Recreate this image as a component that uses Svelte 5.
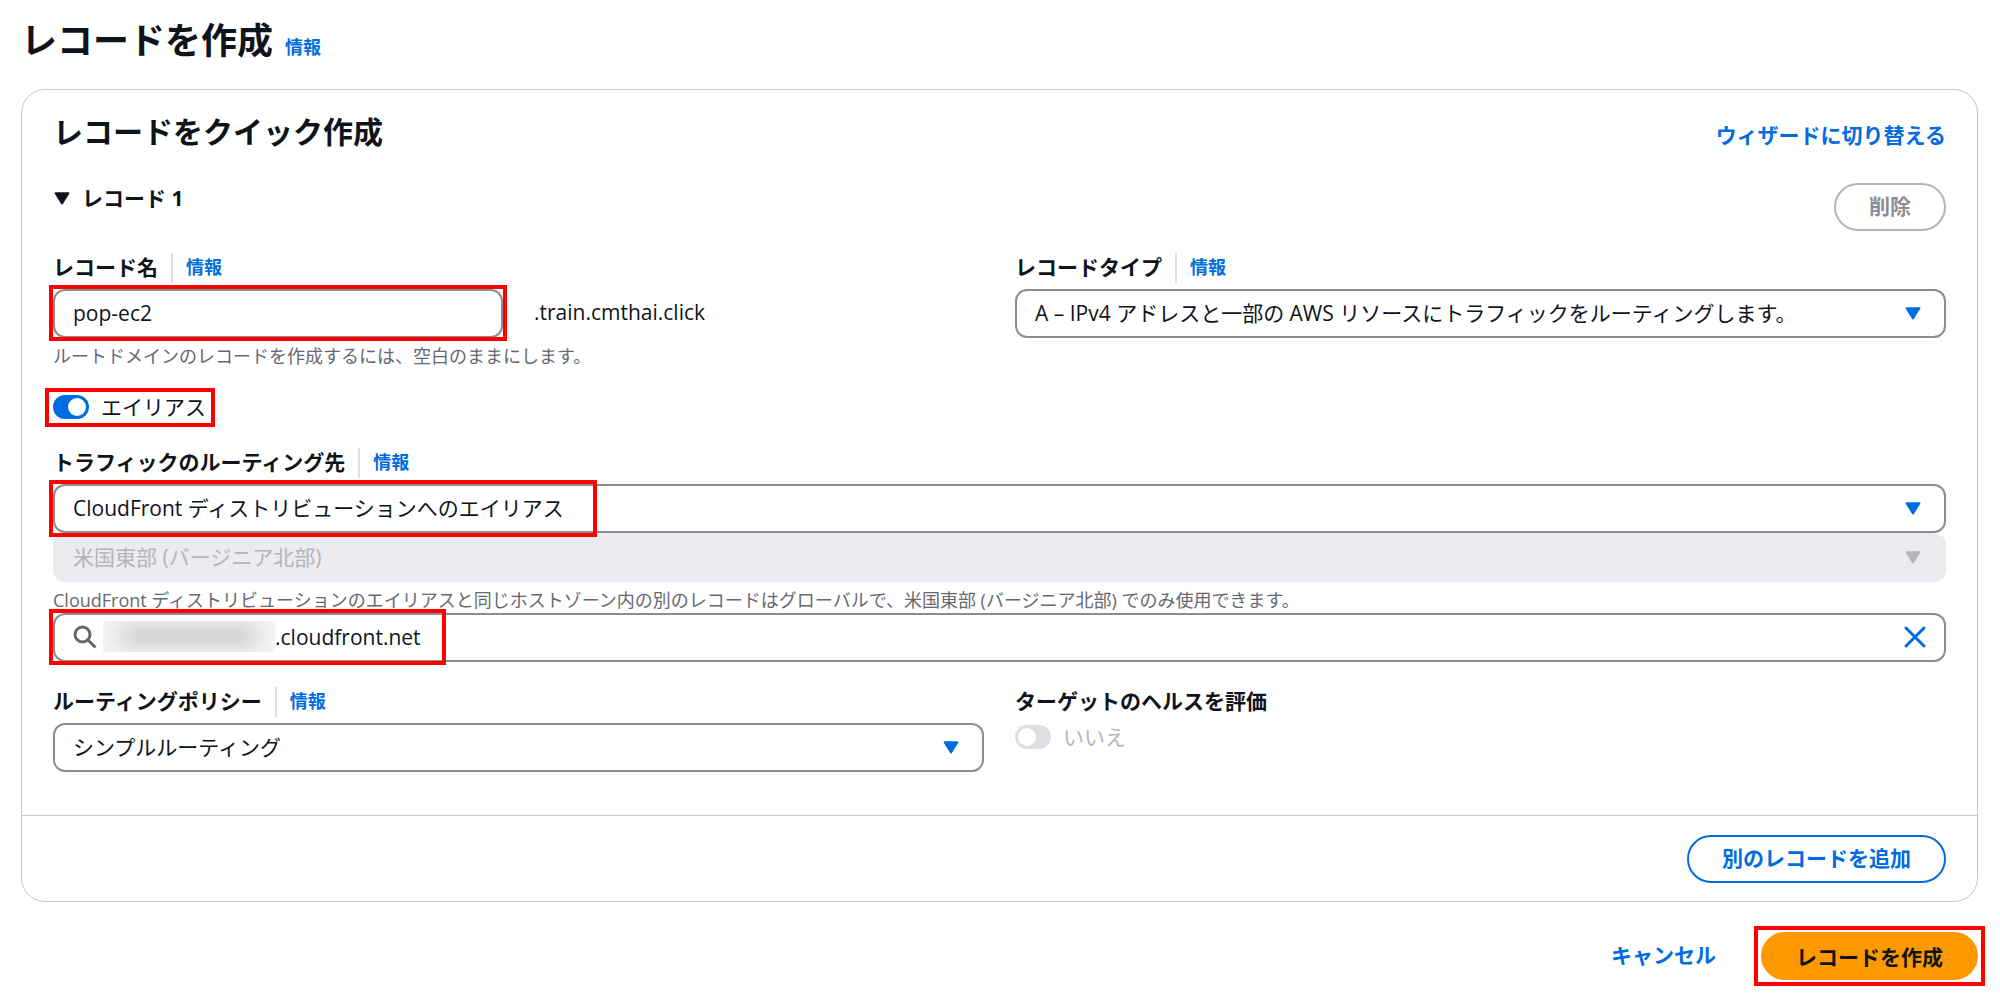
<script lang="ts">
  let recordName = 'pop-ec2';
  let recordType = 'A';
  let alias = true;
  let target = 'cloudfront';
  let region = 'us-east-1';
  let distribution = '.cloudfront.net';
  let policy = 'simple';
  let evaluateHealth = false;
  let open = true;
</script>

{#snippet caret()}
  <svg class="caret" viewBox="0 0 16 13" aria-hidden="true">
    <path d="M1.6 1.3h12.8L8 11.4z" fill="currentColor" stroke="currentColor" stroke-width="2" stroke-linejoin="round" />
  </svg>
{/snippet}

<main class="page">
  <header class="page-header">
    <h1>レコードを作成</h1>
    <a class="info" href="#info">情報</a>
  </header>

  <form on:submit|preventDefault>
    <section class="card">
      <div class="card-body">
        <div class="card-header">
          <h2>レコードをクイック作成</h2>
          <a class="link" href="#wizard">ウィザードに切り替える</a>
        </div>

        <div class="record-header">
          <button type="button" class="toggle-section" aria-expanded={open} on:click={() => (open = !open)}>
            {@render caret()}
            <span>レコード 1</span>
          </button>
          <button type="button" class="btn" disabled>削除</button>
        </div>

        {#if open}
          <div class="fields">
            <div class="columns">
              <div class="field">
                <div class="label-row">
                  <label for="record-name">レコード名</label>
                  <a class="info" href="#name-info">情報</a>
                </div>
                <div class="columns name-row">
                  <div class="mark mark-name">
                    <input id="record-name" class="control" type="text" bind:value={recordName} />
                  </div>
                  <span class="domain">.train.cmthai.click</span>
                </div>
                <p class="help name-help">ルートドメインのレコードを作成するには、空白のままにします。</p>
              </div>

              <div class="field">
                <div class="label-row">
                  <label for="record-type">レコードタイプ</label>
                  <a class="info" href="#type-info">情報</a>
                </div>
                <div class="select">
                  <select id="record-type" class="control" bind:value={recordType}>
                    <option value="A">A – IPv4 アドレスと一部の AWS リソースにトラフィックをルーティングします。</option>
                  </select>
                  {@render caret()}
                </div>
              </div>
            </div>

            <label class="switch mark mark-alias">
              <input type="checkbox" bind:checked={alias} />
              <span>エイリアス</span>
            </label>

            <div class="field">
              <div class="label-row">
                <label for="target">トラフィックのルーティング先</label>
                <a class="info" href="#target-info">情報</a>
              </div>
              <div class="select mark mark-target">
                <select id="target" class="control" bind:value={target}>
                  <option value="cloudfront">CloudFront ディストリビューションへのエイリアス</option>
                </select>
                {@render caret()}
              </div>
              <div class="select disabled">
                <select class="control" aria-label="リージョン" bind:value={region} disabled>
                  <option value="us-east-1">米国東部 (バージニア北部)</option>
                </select>
                {@render caret()}
              </div>
              <p class="help region-help">CloudFront ディストリビューションのエイリアスと同じホストゾーン内の別のレコードはグローバルで、米国東部 (バージニア北部) でのみ使用できます。</p>
              <div class="control search mark mark-search">
                <svg class="search-icon" viewBox="0 0 24 24" aria-hidden="true">
                  <circle cx="9.5" cy="9.5" r="7.5" />
                  <path d="M15 15l7.5 7.5" />
                </svg>
                <span class="redacted"><i></i></span>
                <input type="text" aria-label="ディストリビューションを選択" bind:value={distribution} />
                <button type="button" class="clear" aria-label="クリア" on:click={() => (distribution = '')}>
                  <svg viewBox="0 0 22 22" aria-hidden="true"><path d="M2 2l18 18M20 2L2 20" /></svg>
                </button>
              </div>
            </div>

            <div class="columns">
              <div class="field">
                <div class="label-row">
                  <label for="policy">ルーティングポリシー</label>
                  <a class="info" href="#policy-info">情報</a>
                </div>
                <div class="select">
                  <select id="policy" class="control" bind:value={policy}>
                    <option value="simple">シンプルルーティング</option>
                  </select>
                  {@render caret()}
                </div>
              </div>

              <div class="field">
                <div class="label-row">
                  <label for="health">ターゲットのヘルスを評価</label>
                </div>
                <label class="switch off">
                  <input id="health" type="checkbox" bind:checked={evaluateHealth} disabled />
                  <span>いいえ</span>
                </label>
              </div>
            </div>
          </div>
        {/if}
      </div>

      <footer class="card-footer">
        <button type="button" class="btn">別のレコードを追加</button>
      </footer>
    </section>

    <div class="actions">
      <a class="link" href="#cancel">キャンセル</a>
      <div class="mark mark-submit">
        <button type="submit" class="btn primary">レコードを作成</button>
      </div>
    </div>
  </form>
</main>

<style>
  :global(body) { background: #fff; }
  .page {
    padding: 18px 22px 20px 21px; color: #0f141a;
    font-family: "Open Sans", "Noto Sans CJK JP", sans-serif; font-size: 21px; line-height: 30px;
  }
  .page *, .page *::before, .page *::after { box-sizing: border-box; }
  h1, h2, p { margin: 0; }
  h1 { font-size: 36px; line-height: 46px; font-weight: 700; }
  h2 { font-size: 30px; line-height: 36px; font-weight: 700; }
  a { color: #006ce0; font-weight: 700; text-decoration: none; }
  a:hover { text-decoration: underline; }
  .info { font-size: 18px; }
  input, select, button { font: inherit; color: inherit; }

  .page-header { display: flex; align-items: baseline; gap: 12px; margin-bottom: 25px; }

  .card { border: 1px solid #c6c6cd; border-radius: 24px; }
  .card-body { padding: 24px 31px 43px; }
  .card-header { display: flex; justify-content: space-between; align-items: flex-end; }
  .record-header { display: flex; justify-content: space-between; align-items: flex-start; margin: 33px 0 22px; }
  .toggle-section {
    display: flex; align-items: center; gap: 12px; padding: 0 0 2px 1px;
    border: none; background: none; font-weight: 700; cursor: pointer;
  }
  .card-footer {
    display: flex; justify-content: flex-end; padding: 19px 31px 18px;
    border-top: 1px solid #c6c6cd;
  }

  .fields { display: flex; flex-direction: column; gap: 25px; }
  .columns { display: grid; grid-template-columns: 1fr 1fr; gap: 31px; }
  .label-row { display: flex; height: 30px; margin-bottom: 6px; line-height: 28px; font-weight: 700; }
  .label-row .info { margin-left: 13px; padding-left: 13px; border-left: 2px solid #dedee3; }
  .help { font-size: 18px; line-height: 24px; color: #656871; }
  .name-help { margin-top: 6px; }
  .region-help { margin: 6px 0 1px; }
  .domain { line-height: 46px; }

  .control {
    display: block; width: 100%; height: 49px; padding: 0 18px 2px;
    border: 2px solid #8c8c94; border-radius: 12px; background: #fff; outline: none;
  }
  .control:focus, .search:focus-within { border-color: #006ce0; }
  .select { position: relative; color: #0f141a; }
  .select .control { appearance: none; opacity: 1; cursor: pointer; }
  .caret { flex: none; width: 16px; height: 13px; }
  .select .caret { position: absolute; right: 25px; top: 18px; color: #006ce0; pointer-events: none; }
  .disabled .control { border-color: #ebebf0; background: #ebebf0; color: #b4b4bb; cursor: default; }
  .disabled .caret { color: #b4b4bb; }

  .search { display: flex; align-items: center; }
  .search-icon { flex: none; width: 24px; height: 24px; fill: none; stroke: #656871; stroke-width: 3; }
  .redacted { flex: none; width: 172px; height: 31px; margin-left: 6px; padding: 6px 16px; background: #f4f4f5; overflow: hidden; }
  .redacted i { display: block; height: 18px; border-radius: 9px; background: #c6c6c8; filter: blur(10px); }
  .search input { flex: 1; min-width: 0; padding: 0; border: none; outline: none; background: none; }
  .clear { display: flex; padding: 0; border: none; background: none; cursor: pointer; }
  .clear svg { width: 22px; height: 22px; fill: none; stroke: #006ce0; stroke-width: 3; stroke-linecap: round; }

  .switch { display: flex; align-items: center; gap: 12px; width: fit-content; line-height: 28px; padding-bottom: 2px; cursor: pointer; }
  .switch input {
    appearance: none; flex: none; display: flex; align-items: center;
    width: 36px; height: 24px; margin: 0; padding: 0 3px; border-radius: 12px; background: #8c8c94;
  }
  .switch input::before { content: ''; width: 18px; height: 18px; border-radius: 50%; background: #fff; }
  .switch input:checked { justify-content: flex-end; background: #006ce0; }
  .switch input:disabled { background: #dedee3; }
  .off { color: #b4b4bb; cursor: default; }

  .btn {
    display: block; height: 48px; padding: 0 33px 2px; border: 2px solid #006ce0; border-radius: 24px;
    background: #fff; color: #006ce0; font-weight: 700; cursor: pointer;
  }
  .btn:disabled { border-color: #b4b4bb; color: #8c8c94; cursor: default; }
  .primary { border-color: #ff9900; background: #ff9900; color: #0f141a; }
  .actions { display: flex; justify-content: flex-end; gap: 45px; margin-top: 30px; line-height: 46px; }

  /* red annotation frames, drawn over the controls */
  .mark { position: relative; }
  .mark::after { content: ''; position: absolute; z-index: 1; border: 4px solid #f00; pointer-events: none; }
  .mark-name::after { inset: -4px -4px -3px; }
  .mark-alias::after { inset: -5px -9px -4px -8px; }
  .mark-target::after { top: -4px; bottom: -4px; left: -4px; width: 548px; }
  .mark-search::after { top: -6px; bottom: -5px; left: -6px; width: 397px; }
  .mark-submit::after { inset: -6px -7px; }
</style>
